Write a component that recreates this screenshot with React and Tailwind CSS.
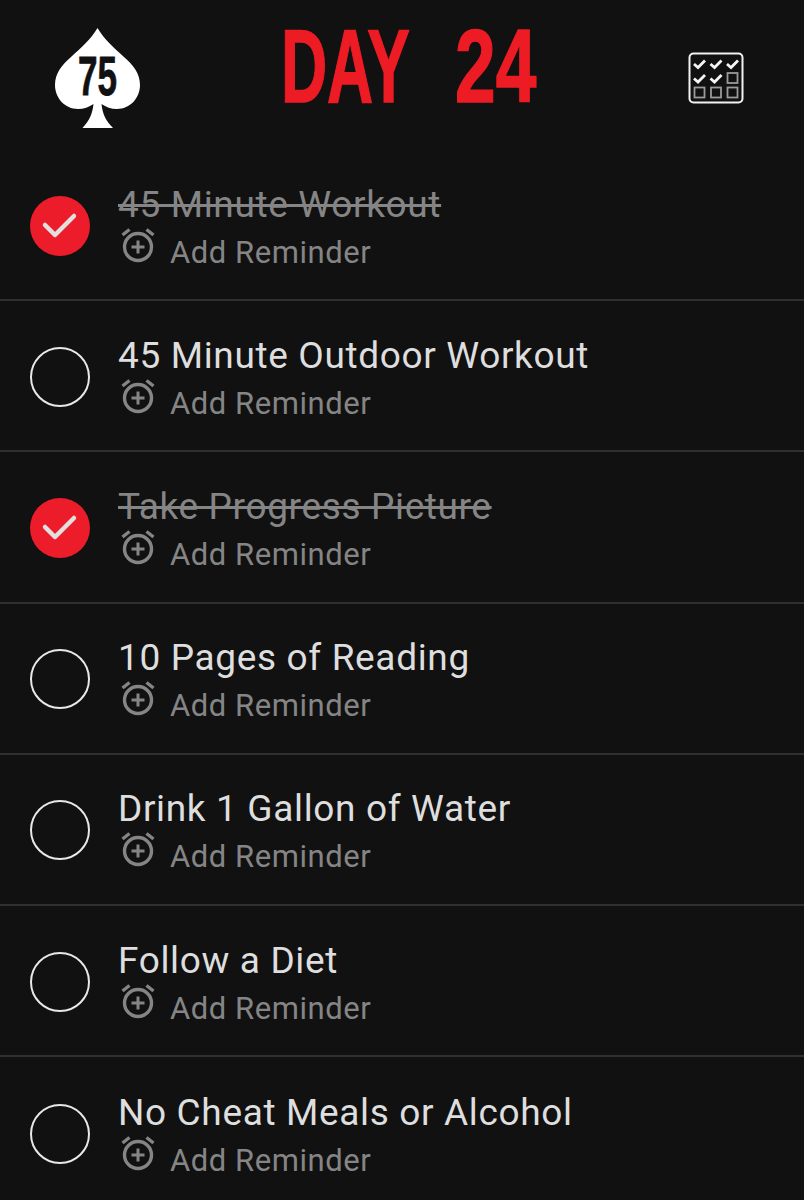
import React from "react";

const tasks = [
  { label: "45 Minute Workout", done: true },
  { label: "45 Minute Outdoor Workout", done: false },
  { label: "Take Progress Picture", done: true },
  { label: "10 Pages of Reading", done: false },
  { label: "Drink 1 Gallon of Water", done: false },
  { label: "Follow a Diet", done: false },
  { label: "No Cheat Meals or Alcohol", done: false },
];

const SpadeLogo = () => (
  <svg width="88" height="102" viewBox="0 0 88 102" className="shrink-0">
    <path
      d="M43.500 0 C37 11 27 20 17 29 C8 37 1 45 1 57 C1 70 11 81 24 81 C30 81 35 79 39.500 76 C38.500 86 35 93 28.500 100 L59 100 C52 93 48.500 86 47.500 76 C52 79 57 81 63 81 C76 81 86 70 86 57 C86 45 79 37 70 29 C60 20 50 11 43.500 0 Z"
      fill="#ffffff"
    />
    <text
      x="43.500"
      y="67"
      textAnchor="middle"
      textLength="39"
      lengthAdjust="spacingAndGlyphs"
      fontFamily="'Liberation Sans', sans-serif"
      fontWeight="700"
      fontSize="55"
      stroke="#111112"
      strokeWidth="0.8"
      fill="#111112"
    >
      75
    </text>
  </svg>
);

const GridIcon = () => (
  <svg width="56" height="52" viewBox="0 0 56 52" fill="none" className="shrink-0">
    <rect x="1.500" y="1.500" width="53" height="49" rx="4" stroke="#f2f2f2" strokeWidth="2" />
    <g stroke="#f5f5f5" strokeWidth="2.800">
      <path d="M6 12 L10 15.500 L17 8.500" />
      <path d="M22.500 12 L26.500 15.500 L33.500 8.500" />
      <path d="M39 12 L43 15.500 L50 8.500" />
      <path d="M6 26.500 L10 30 L17 23" />
      <path d="M22.500 26.500 L26.500 30 L33.500 23" />
    </g>
    <g stroke="#9a9a9a" strokeWidth="1.800">
      <rect x="39.500" y="21" width="10" height="10" />
      <rect x="6.500" y="35.500" width="10" height="10" />
      <rect x="23" y="35.500" width="10" height="10" />
      <rect x="39.500" y="35.500" width="10" height="10" />
    </g>
  </svg>
);

const AlarmPlus = () => (
  <svg width="34" height="36" viewBox="0 0 34 36" fill="none" stroke="#858585" className="-mt-[16px] shrink-0">
    <circle cx="17" cy="20" r="13.500" strokeWidth="3.400" />
    <path d="M1.500 8 L8.500 2.500" strokeWidth="3.400" />
    <path d="M32.500 8 L25.500 2.500" strokeWidth="3.400" />
    <path d="M17 13.500 V26.500 M10.500 20 H23.500" strokeWidth="3" />
  </svg>
);

const CheckCircle = ({ done }) =>
  done ? (
    <div className="mt-[2px] flex h-[60px] w-[60px] shrink-0 items-center justify-center rounded-full bg-[#ed1c2a]">
      <svg width="38" height="30" viewBox="0 0 38 30" fill="none">
        <path d="M4 14 L14 24 L33 5" stroke="#e0e0e0" strokeWidth="4.500" strokeLinecap="round" strokeLinejoin="round" />
      </svg>
    </div>
  ) : (
    <div className="mt-[2px] h-[60px] w-[60px] shrink-0 rounded-full border-2 border-[#e8e8e8]" />
  );

const TaskRow = ({ task, last }) => (
  <div className={`flex h-[151.2px] items-center pl-[30px] ${last ? "" : "border-b-2 border-[#303031]"}`}>
    <CheckCircle done={task.done} />
    <div className="ml-[28px] flex flex-col pt-[8px]">
      <span
        className={`text-[37px] leading-[44px] tracking-[0.65px] ${
          task.done ? "text-[#858585] line-through" : "text-[#dedede]"
        }`}
      >
        {task.label}
      </span>
      <div className="mt-[4px] flex items-center pl-[3px]">
        <AlarmPlus />
        <span className="ml-[15px] text-[31px] leading-[44px] tracking-[0.55px] text-[#858585]">Add Reminder</span>
      </div>
    </div>
  </div>
);

export default function App() {
  return (
    <div className="h-[1200px] w-[804px] overflow-hidden bg-[#111112] font-['Roboto',sans-serif]">
      <header className="flex h-[150px] items-start pt-[28px]">
        <div className="ml-[54px]">
          <SpadeLogo />
        </div>
        <h1 className="flex flex-1 gap-[46px] whitespace-nowrap pl-[139px] font-['Liberation_Sans',sans-serif] text-[103px] font-bold leading-[78px] text-[#ed1c24] [-webkit-text-stroke:1.5px_#ed1c24]">
          <span className="block w-[128px] origin-left scale-x-[0.62]">DAY</span>
          <span className="block w-[81px] origin-left scale-x-[0.71]">24</span>
        </h1>
        <div className="mr-[60px] mt-[24px]">
          <GridIcon />
        </div>
      </header>
      {tasks.map((task, i) => (
        <TaskRow key={task.label} task={task} last={i === tasks.length - 1} />
      ))}
    </div>
  );
}
